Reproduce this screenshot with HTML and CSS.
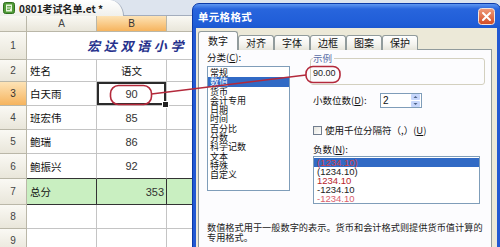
FILE: index.html
```html
<!DOCTYPE html>
<html lang="zh-CN">
<head>
    <meta charset="UTF-8">
    <meta name="viewport" content="width=device-width, initial-scale=1.0">
    <title>单元格格式</title>
    <link rel="stylesheet" href="styles.css">
</head>
<body>
<div class="screen">
    <!-- Spreadsheet behind the dialog -->
    <div class="sheet">
        <div class="tabbar">
            <div class="doc-tab">
                <svg width="12" height="12" viewBox="0 0 12 12">
                    <rect x="0.5" y="0.5" width="11" height="11" rx="2" fill="#4f9a36" stroke="#2f6e1e"/>
                    <rect x="3" y="2.5" width="6" height="7" fill="#e8f5dc"/>
                    <path d="M4 4.5h4M4 6h4M4 7.5h3" stroke="#4f9a36" stroke-width="0.8"/>
                </svg>
                <span>0801考试名单.et *</span>
            </div>
        </div>

        <div class="grid">
            <div class="hd"></div>
            <div class="hd">A</div>
            <div class="hd sel">B</div>
            <div class="hd"></div>

            <div class="hd">1</div>
            <div class="cell title">宏达双语小学</div>

            <div class="hd">2</div>
            <div class="cell">姓名</div>
            <div class="cell mid">语文</div>
            <div class="cell"></div>

            <div class="hd sel">3</div>
            <div class="cell">白天雨</div>
            <div class="cell num active">90</div>
            <div class="cell"></div>

            <div class="hd">4</div>
            <div class="cell">班宏伟</div>
            <div class="cell num">85</div>
            <div class="cell"></div>

            <div class="hd">5</div>
            <div class="cell">鲍瑞</div>
            <div class="cell num">86</div>
            <div class="cell"></div>

            <div class="hd">6</div>
            <div class="cell above">鲍振兴</div>
            <div class="cell num above">92</div>
            <div class="cell above"></div>

            <div class="hd">7</div>
            <div class="cell total">总分</div>
            <div class="cell num total right">353</div>
            <div class="cell total"></div>

            <div class="hd">8</div>
            <div class="cell"></div>
            <div class="cell"></div>
            <div class="cell"></div>

            <div class="hd">9</div>
            <div class="cell"></div>
            <div class="cell"></div>
            <div class="cell"></div>
        </div>
    </div>

    <!-- Format Cells dialog -->
    <div class="dialog">
        <div class="titlebar">
            <span class="title">单元格格式</span>
            <svg class="close" width="17" height="17" viewBox="0 0 17 17">
                <defs>
                    <linearGradient id="cl" x1="0" y1="0" x2="0" y2="1">
                        <stop offset="0" stop-color="#ef9c7c"/>
                        <stop offset="1" stop-color="#d24a22"/>
                    </linearGradient>
                </defs>
                <rect x="0.5" y="0.5" width="16" height="16" rx="3" fill="url(#cl)" stroke="#f4e4dc"/>
                <path d="M5 5L12 12M12 5L5 12" stroke="#fff" stroke-width="2" stroke-linecap="round"/>
            </svg>
        </div>

        <div class="dlg-body">
            <div class="tabs">
                <span class="tab on">数字</span>
                <span class="tab">对齐</span>
                <span class="tab">字体</span>
                <span class="tab">边框</span>
                <span class="tab">图案</span>
                <span class="tab">保护</span>
            </div>

            <div class="panel">
                <div class="cat">
                    <div class="lbl">分类(<u>C</u>):</div>
                    <ul class="list cat-list">
                        <li>常规</li>
                        <li class="sel">数值</li>
                        <li>货币</li>
                        <li>会计专用</li>
                        <li>日期</li>
                        <li>时间</li>
                        <li>百分比</li>
                        <li>分数</li>
                        <li>科学记数</li>
                        <li>文本</li>
                        <li>特殊</li>
                        <li>自定义</li>
                    </ul>
                </div>

                <div class="opts">
                    <fieldset class="sample">
                        <legend>示例</legend>
                        <div class="sample-val">90.00</div>
                    </fieldset>

                    <div class="field-row">
                        <span class="lbl wide">小数位数(<u>D</u>):</span>
                        <span class="spin">
                            <span>2</span>
                            <svg width="9" height="13" viewBox="0 0 9 13">
                                <rect x="0" y="0" width="9" height="6" rx="1" fill="#c6d6fb"/>
                                <rect x="0" y="7" width="9" height="6" rx="1" fill="#c6d6fb"/>
                                <path d="M2.5 4L4.5 2L6.5 4Z" fill="#4d6185"/>
                                <path d="M2.5 9L4.5 11L6.5 9Z" fill="#4d6185"/>
                            </svg>
                        </span>
                    </div>

                    <div class="check-row">
                        <span class="box"></span>
                        <span>使用千位分隔符（,）(<u>U</u>)</span>
                    </div>

                    <div class="lbl">负数(<u>N</u>):</div>
                    <ul class="list neg-list">
                        <li class="sel">(1234.10)</li>
                        <li>(1234.10)</li>
                        <li class="red">1234.10</li>
                        <li>-1234.10</li>
                        <li class="pink">-1234.10</li>
                    </ul>
                </div>

                <p class="desc">数值格式用于一般数字的表示。货币和会计格式则提供货币值计算的<br>专用格式。</p>
            </div>
        </div>
    </div>

    <!-- red annotation marks -->
    <svg class="marks" width="500" height="247" viewBox="0 0 500 247">
        <rect x="110.5" y="85.5" width="41" height="19" rx="8" fill="none" stroke="#b3293b" stroke-width="1.6"/>
        <rect x="306" y="66.5" width="34" height="16" rx="7" fill="none" stroke="#b3293b" stroke-width="1.6"/>
        <path d="M151.5 94 L306 75" fill="none" stroke="#b3293b" stroke-width="1.3"/>
    </svg>
</div>
</body>
</html>
```

FILE: styles.css
```css
* {
    box-sizing: border-box;
}

body {
    margin: 0;
    font-family: "Noto Sans CJK SC", sans-serif;
}

.screen {
    position: relative;
    width: 500px;
    height: 247px;
    overflow: hidden;
    background: #fff;
}

/* Spreadsheet */
.sheet {
    display: flex;
    flex-direction: column;
    height: 100%;
}

.tabbar {
    height: 16px;
    flex: none;
    display: flex;
    background: #dde4ee;
    border-bottom: 1px solid #a3adbd;
}

.doc-tab {
    width: 124px;
    height: 16px;
    display: flex;
    align-items: center;
    gap: 4px;
    padding-left: 3px;
    background: linear-gradient(#ffffff, #f0f0ec);
    border-right: 1px solid #a3adbd;
    border-top-right-radius: 14px 16px;
    font-size: 10px;
    font-weight: bold;
    color: #222;
    white-space: nowrap;
}

.grid {
    display: grid;
    grid-template-columns: 27px 70px 70px 70px;
    grid-template-rows: 16px 28px 22px 24px 24px 24px 25px 26px 24px 24px;
}

.hd {
    display: flex;
    align-items: center;
    justify-content: center;
    background: linear-gradient(#faf9f4, #e9e6da);
    border-right: 1px solid #bab7a8;
    border-bottom: 1px solid #bab7a8;
    font: 10px "Liberation Sans", sans-serif;
    color: #444;
}

.hd.sel {
    background: linear-gradient(#fde3b6, #f6b45e);
    color: #333;
}

.cell {
    display: flex;
    align-items: center;
    padding-left: 3px;
    border-right: 1px solid #c4c4c4;
    border-bottom: 1px solid #c4c4c4;
    font-size: 10.5px;
    color: #111;
    white-space: nowrap;
    overflow: hidden;
}

.cell.mid,
.cell.num {
    justify-content: center;
    padding-left: 0;
}

.cell.num {
    font: 11px "Liberation Sans", sans-serif;
    color: #333;
}

.cell.right {
    justify-content: flex-end;
    padding-right: 2px;
}

.cell.title {
    grid-column: 2 / 5;
    padding-left: 60px;
    font-size: 13px;
    font-style: italic;
    letter-spacing: 3.7px;
    color: #26318c;
}

.cell.above {
    border-bottom-color: #333;
}

.cell.total {
    background: #c9efc1;
    border-right-color: #333;
    border-bottom-color: #333;
}

.cell.active {
    position: relative;
    overflow: visible;
    z-index: 1;
    box-shadow: inset 0 0 0 2px #2b2b2b;
}

.cell.active::after {
    content: "";
    position: absolute;
    right: -3px;
    bottom: -3px;
    width: 5px;
    height: 5px;
    background: #222;
    border: 1px solid #fff;
}

/* Dialog window */
.dialog {
    position: absolute;
    left: 192px;
    top: 3px;
    width: 309px;
    height: 252px;
    z-index: 2;
    display: flex;
    flex-direction: column;
    padding: 0 3px 3px;
    border: 1px solid #0b3aa8;
    border-radius: 7px 7px 0 0;
    background: linear-gradient(#5f97f1 0, #2865dd 5px, #1f5dd7 20px, #1b57d0 24px, #2359d2 25px);
}

.titlebar {
    height: 24px;
    flex: none;
    display: flex;
    align-items: center;
    justify-content: space-between;
    padding: 0 2px 0 2px;
}

.title {
    font-size: 10.5px;
    font-weight: bold;
    color: #fff;
    letter-spacing: 0.3px;
}

.dlg-body {
    flex: 1;
    display: flex;
    flex-direction: column;
    padding: 4px 5px 0 2px;
    background: #ece9d8;
}

.tabs {
    height: 18px;
    flex: none;
    display: flex;
    align-items: flex-end;
    position: relative;
    z-index: 1;
    margin-bottom: -1px;
}

.tab {
    height: 15px;
    padding: 0 7px;
    border: 1px solid #919b9c;
    border-bottom: 0;
    border-radius: 3px 3px 0 0;
    background: linear-gradient(#ffffff, #f4f3ee 60%, #e6e4da);
    font-size: 10px;
    line-height: 14px;
    color: #111;
}

.tab.on {
    height: 19px;
    padding: 0 9px;
    line-height: 17px;
    background: #fcfcfe;
}

.panel {
    flex: 1;
    display: grid;
    grid-template-columns: 83px 175px;
    grid-template-rows: auto auto;
    column-gap: 20px;
    align-content: start;
    padding: 2px 6px 0 8px;
    background: #fcfcfe;
    border: 1px solid #919b9c;
    font-size: 9.5px;
    color: #111;
}

.lbl {
    line-height: 11px;
    white-space: nowrap;
}

.list {
    margin: 0;
    padding: 1px 0;
    list-style: none;
    background: #fff;
    border: 1px solid #7f9db9;
    overflow: hidden;
}

.cat-list {
    margin-top: 3px;
    height: 125px;
}

.cat-list li {
    height: 9.3px;
    padding-left: 2px;
    font-size: 9px;
    line-height: 9.3px;
}

.list li.sel {
    background: #316ac5;
    color: #fff;
}

.opts {
    display: flex;
    flex-direction: column;
}

.sample {
    margin: 1px 0 0;
    padding: 3px 0 5px 2px;
    border: 1px solid #d3d0bf;
    border-radius: 3px;
}

.sample legend {
    padding: 0 2px 0 0;
    line-height: 11px;
    color: #5a6ea6;
}

.sample-val {
    font: 9px/12px "Liberation Sans", sans-serif;
    color: #222;
}

.field-row {
    display: flex;
    align-items: center;
    margin-top: 8px;
    padding-left: 3px;
    height: 15px;
}

.lbl.wide {
    width: 67px;
}

.spin {
    width: 42px;
    height: 15px;
    display: flex;
    align-items: center;
    justify-content: space-between;
    padding: 0 1px 0 2px;
    background: #fff;
    border: 1px solid #7f9db9;
    font: 10px "Liberation Sans", sans-serif;
}

.check-row {
    display: flex;
    align-items: center;
    gap: 3px;
    height: 12px;
    margin-top: 16px;
    padding-left: 3px;
    white-space: nowrap;
}

.box {
    width: 9px;
    height: 9px;
    border: 1px solid #717d8e;
    background: linear-gradient(135deg, #e4e3dc, #ffffff);
}

.opts > .lbl {
    margin-top: 8px;
    padding-left: 3px;
}

.neg-list {
    margin: 1px 5px 0 3px;
    height: 48px;
}

.neg-list li {
    height: 9.1px;
    padding-left: 3px;
    font: 9.5px/9.1px "Liberation Sans", sans-serif;
    color: #222;
}

.neg-list li.sel {
    color: #d2414c;
}

.neg-list li.red {
    color: #b8242c;
}

.neg-list li.pink {
    color: #d9606c;
}

.desc {
    grid-column: 1 / -1;
    margin: 18px 0 0;
    font-size: 9.2px;
    line-height: 10px;
    color: #222;
    white-space: nowrap;
}

/* Red annotation overlay */
.marks {
    position: absolute;
    left: 0;
    top: 0;
    z-index: 3;
    pointer-events: none;
}
```
